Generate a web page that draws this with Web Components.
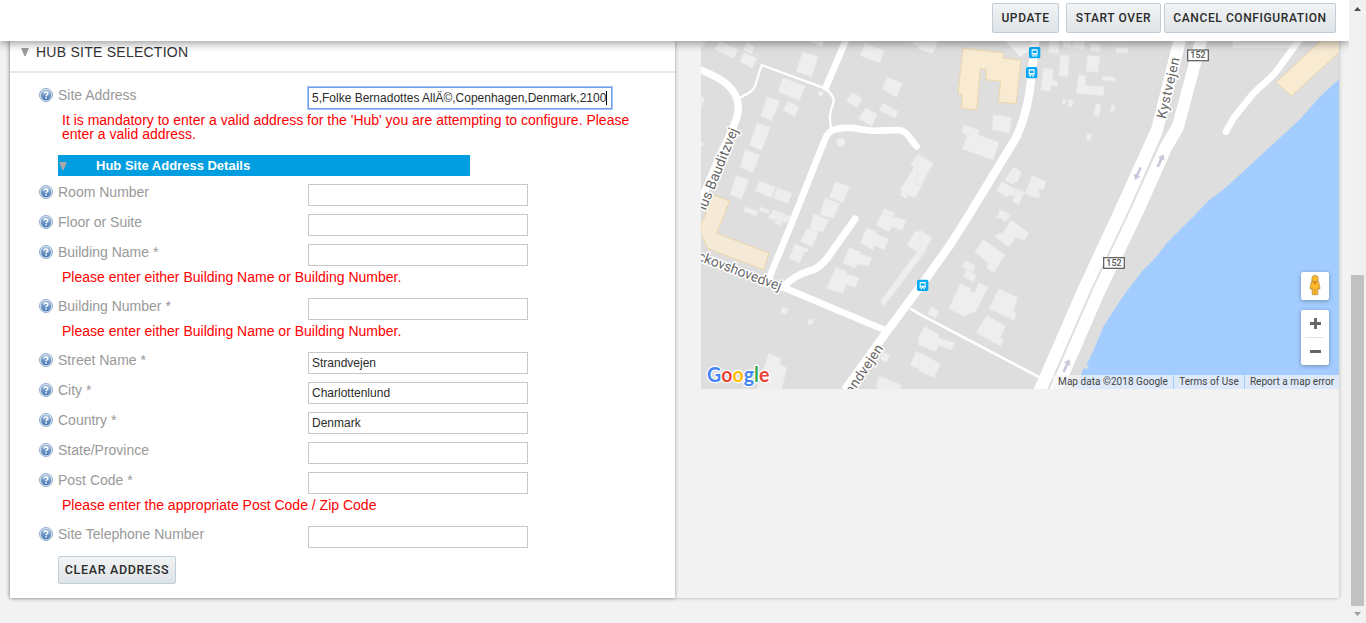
<!DOCTYPE html>
<html lang="en">
<head>
<meta charset="utf-8">
<title>Hub Site Selection</title>
<style>
html,body{margin:0;height:100%;overflow:hidden;background:#f2f2f2}
body{font-family:"Liberation Sans",Arial,sans-serif;font-size:14px;color:#333}
</style>
</head>
<body>
<config-page></config-page>
<script>
const define = (name, html, setup) => {
  const tpl = document.createElement('template');
  tpl.innerHTML = html;
  customElements.define(name, class extends HTMLElement {
    connectedCallback() {
      if (this.shadowRoot) return;
      const root = this.attachShadow({mode: 'open'});
      root.append(tpl.content.cloneNode(true));
      if (setup) setup(this, root);
    }
  });
};

define('action-button', `
<style>
:host{display:flex;align-items:center;justify-content:center;box-sizing:border-box;height:30px;border:1px solid #c1cdd8;border-radius:2px;background:linear-gradient(#f1f3f4,#dfe4e8);font:500 12px/14px Roboto,sans-serif;letter-spacing:.6px;color:#2b2b2b;white-space:nowrap}
</style><slot></slot>`);

define('help-icon', `
<style>:host{display:block;width:14px;height:14px}svg{display:block}</style>
<svg width="14" height="14" viewBox="0 0 14 14">
<defs><linearGradient id="g" x1="0" y1="0" x2="0" y2="1"><stop offset="0" stop-color="#a9c3df"/><stop offset="1" stop-color="#3f72b2"/></linearGradient></defs>
<circle cx="7" cy="7" r="6.5" fill="#dce7f2" stroke="#86a3c6" stroke-width=".9"/>
<circle cx="7" cy="7" r="5.2" fill="url(#g)"/>
<path d="M5.1 5.6C5.1 3.6 8.9 3.6 8.9 5.5C8.9 6.8 7.1 6.7 7.1 8.3" fill="none" stroke="#fff" stroke-width="1.5"/><rect x="6.3" y="9.2" width="1.6" height="1.5" fill="#fff"/>
</svg>`);

define('form-row', `
<style>
:host{display:block;margin-bottom:8px}
.row{display:grid;grid-template-columns:14px 250px auto;column-gap:5px;justify-content:start;align-items:start;height:22px}
help-icon{margin-top:1px}
.label{line-height:16px;color:#999;white-space:nowrap}
.row>.label{width:245px}
.box{box-sizing:border-box;width:220px;height:22px;margin-left:-5px;border:1px solid #c8c8c8;background:#fff;padding:0 3px;font-size:12px;line-height:20px;color:#2b2b2b;white-space:nowrap;display:flex;align-items:center}
:host([focused]) .box{width:304px;border-color:#6f9fe8;box-shadow:0 0 0 1px #a3c4f5}
:host([focused]) .box::after{content:"";width:1px;height:14px;background:#000}
.error{display:none;padding:4px 20px 6px 23px;line-height:14px;color:#f00}
:host([error]) .error{display:block}
</style>
<div class="row"><help-icon></help-icon><div class="label"><slot></slot></div><div class="box"></div></div>
<div class="error"></div>`, (el, root) => {
  root.querySelector('.box').textContent = el.getAttribute('value') || '';
  root.querySelector('.error').textContent = el.getAttribute('error') || '';
});

define('section-bar', `
<style>:host{display:flex;align-items:center;box-sizing:border-box;width:412px;height:21px;margin:0 0 8px 19px;background:#009de0;color:#fff;font-weight:bold;font-size:13px}
svg{margin:1px 29px 0 1px}</style>
<svg width="8" height="8"><path d="M0 0H8L4.6 8H3.4Z" fill="#a9a9a9"/></svg><slot></slot>`);

define('hub-panel', `
<style>
:host{display:block;background:#fff;box-shadow:0 0 4px rgba(0,0,0,.35)}
header{display:flex;align-items:center;box-sizing:border-box;height:32px;padding:0 0 9px 11px;border-bottom:2px solid #e8e8e8;letter-spacing:.25px;color:#333}
header svg{margin-right:7px}
.body{padding:14px 0 0 29px}
action-button{width:118px;height:28px;margin-left:19px;font-size:12.5px;letter-spacing:.65px}
</style>
<header><svg width="8" height="8"><path d="M0 0H8L4.6 8H3.4Z" fill="#9c9c9c"/></svg><span>HUB SITE SELECTION</span></header>
<div class="body">
<form-row focused value="5,Folke Bernadottes AllÄ©,Copenhagen,Denmark,2100" error="It is mandatory to enter a valid address for the 'Hub' you are attempting to configure. Please enter a valid address.">Site Address</form-row>
<section-bar>Hub Site Address Details</section-bar>
<form-row>Room Number</form-row>
<form-row>Floor or Suite</form-row>
<form-row error="Please enter either Building Name or Building Number.">Building Name *</form-row>
<form-row error="Please enter either Building Name or Building Number.">Building Number *</form-row>
<form-row value="Strandvejen">Street Name *</form-row>
<form-row value="Charlottenlund">City *</form-row>
<form-row value="Denmark">Country *</form-row>
<form-row>State/Province</form-row>
<form-row error="Please enter the appropriate Post Code / Zip Code">Post Code *</form-row>
<form-row>Site Telephone Number</form-row>
<action-button>CLEAR ADDRESS</action-button>
</div>`);

define('map-controls', `
<style>
:host{display:flex;flex-direction:column;gap:10px}
div{width:28px;background:#fff;border-radius:2px;box-shadow:0 1px 4px rgba(0,0,0,.3)}
svg{display:block}
</style>
<div><svg width="28" height="28" viewBox="0 0 28 28">
<path d="M10.6 9h6.8l1.7 7.5-1.7.8-.6-1.5V22.7h-5.6v-6.9l-.6 1.5-1.7-.8z" fill="#fdbb2b" stroke="#b58b42" stroke-width=".8"/>
<circle cx="14" cy="6.6" r="3.2" fill="#fdbb2b" stroke="#b58b42" stroke-width=".8"/>
<path d="M11.8 10h4.4L14 13z" fill="#e8801c"/><path d="M14 17v5.5" stroke="#d9932a" stroke-width="1"/></svg></div>
<div><svg width="28" height="55" viewBox="0 0 28 55"><path d="M9 13.5h11M14.5 8v11M9 41.5h11" stroke="#666" stroke-width="2.8"/><path d="M4 27.5h19" stroke="#e4e4e4"/></svg></div>`);

define('site-map', `
<style>
:host{display:block;position:relative;width:638px;height:348px;overflow:hidden;background:#dedede}
svg.map{display:block}
map-controls{position:absolute;right:10px;top:231px}
.credit{position:absolute;right:0;bottom:0;display:flex;gap:1px;height:14px;font:10px/14px Roboto,sans-serif;color:#444;letter-spacing:.04px;white-space:nowrap}
.credit span{box-sizing:border-box;background:rgba(245,245,245,.7);text-align:center}
.r{fill:none;stroke:#fff;stroke-linejoin:round}
.b{fill:#eee;stroke:#e5e5e5;stroke-width:2}
.y{fill:#f8ebd2;stroke:#edd6aa;stroke-width:3}
.t{font-family:Roboto,sans-serif;fill:#666;stroke:#fff;stroke-width:9;paint-order:stroke;stroke-linejoin:round}
</style>
<svg class="map" width="638" height="348" viewBox="18 3 1914 1044">
<defs>
<g id="bus"><rect width="34" height="34" rx="5" fill="#03a9f4"/><path d="M8 7h18v18h-3v4h-4v-4h-4v4h-4v-4H8z" fill="#fff"/><path d="M11 11h12v7H11z" fill="#03a9f4"/><path d="M11 21h3v3h-3zM20 21h3v3h-3z" fill="#03a9f4"/></g>
<path id="arr" d="M-4 22V-4h-7L0-20 11-4H4v26z" fill="#c8c9dc"/>
</defs>
<path fill="#a3ccff" d="M1932 118L1875 170 1815 238 1590 445 1540 482 1500 525 1415 610 1380 655 1340 695 1280 775 1225 860 1200 920 1175 975 1183 987 1165 985 1140 1050H1932z"/>
<path class="b" d="M58 28L74 3 129 28 117 56ZM155 8L180 18 170 42 145 30ZM147 37L186 55 172 85 134 65ZM18 0H35L26 20 18 18ZM340 0H388L380 20ZM322 35L370 50 350 112 304 95ZM264 113L332 138 313 182 249 155ZM216 171L255 183 230 242 197 228ZM279 183L313 202 299 231 263 210ZM187 248L226 262 200 332 162 315ZM151 328L195 345 174 399 135 382ZM124 406L163 420 139 478 104 463ZM193 422L242 442 230 474 181 452ZM246 443L292 460 279 490 235 474ZM18 168L30 175 18 208ZM18 305L28 309 24 320 18 319ZM510 10L569 32 555 69 495 47ZM645 10L690 -5 690 30ZM577 110L622 130 605 173 561 147ZM472 157L502 175 486 203 454 182ZM513 203L547 222 530 259 490 235ZM564 190L610 215 601 235 552 210ZM668 341L715 369 661 474 640 465 633 476 616 465 622 455 615 450 658 380 647 374ZM421 424L464 440 444 488 402 472ZM391 474L436 491 415 535 375 525 378 512ZM150 500L192 514 184 527 145 514ZM197 500L224 512 220 522 191 512ZM235 509L292 530 270 550 220 535ZM568 505L600 520 592 540 555 530Z"/>
<circle cx="377" cy="161" r="8" fill="#eee"/><circle cx="437" cy="307" r="13" fill="#eee"/>
<g transform="translate(0 525)"><path class="b" d="M170 0H185V7ZM223 -3L272 0 262 22 221 5ZM245 9L262 17 256 32 238 22ZM355 -5L403 15 384 52 371 46 368 54 345 42ZM337 40L371 51 352 95 315 80ZM300 87L328 97 341 101 338 112 330 110 313 145 281 130ZM560 -5L634 15 622 47 591 35 581 51 543 30ZM514 38L543 49 545 58 582 71 567 105 539 90 534 105 496 84ZM463 98L496 110 497 118 532 127 520 154 488 147 478 160 443 144ZM423 156L455 169 456 176 493 188 481 217 454 208 444 235 394 221ZM636 90L660 50 678 48 695 60 695 105 568 272 555 260 666 110ZM262 275L280 280 274 299 257 292ZM221 415L258 430 255 448 276 459 260 525H185ZM566 411L586 423 572 443 556 431ZM553 483L620 510 612 530H550L543 512ZM690 335L695 330V392L673 385 680 348ZM663 410L700 427V475L645 450Z"/><path d="M343 319V330" stroke="#eee" stroke-width="6"/><circle cx="347" cy="320" r="8" fill="#eee"/></g>
<g transform="translate(675 0)"><path class="b" d="M-5 0H56L38 41 -5 27ZM388 0H418L415 42 386 38ZM430 -5H455L452 25 428 20ZM458 0H495L493 28 455 24ZM514 10L543 14 540 35 511 31ZM589 22L624 23 623 40 587 38ZM421 44L448 48 444 110 416 107ZM503 46L540 50 533 98 498 94ZM371 84L400 88 398 121 414 124 412 139 394 137 391 154 362 151ZM475 104L497 107 495 136 553 140 551 168 469 160ZM549 107L587 112 585 124 546 120ZM429 177L439 179 436 194 427 192ZM447 177L461 180 455 202 443 199ZM527 190L543 193 537 230 521 226ZM575 194L586 197 580 217 570 213ZM501 281L515 283 512 302 498 300ZM220 224L275 232 269 280 215 270ZM132 255L178 270 174 284 237 307 219 360 127 327 141 287 125 274ZM-10 345L40 370 0 435-10 435ZM281 380L305 396 292 428 282 425 278 434 254 420ZM246 424L289 449 280 468 266 466 260 472 229 453ZM290 445L314 456 296 494 278 484ZM337 406L379 426 370 450 359 446 354 456 362 462 355 475 314 462ZM239 507L272 525 265 535H229Z"/>
<path d="M250 -3H365L330 30 300 50Z" fill="#f2f2f2"/><path class="y" d="M129 25L251 38 249 54 303 61 288 191 235 186 242 124 197 119 200 88 181 87 170 210 124 205 127 164 114 161Z"/></g>
<g transform="translate(675 525)"><path class="b" d="M232 0H270L255 20ZM274 15L328 55 312 77 288 67 267 96 224 65 239 52 246 56ZM190 73L256 120 221 174 199 158 205 145 164 110ZM137 136L166 153 160 170 125 155ZM140 163L169 180 160 200 129 185ZM121 205L153 220 151 231 163 232 176 203 205 217 167 291 130 304 86 281ZM236 221L293 247 281 290 290 296 282 316 207 282ZM200 300L257 334 242 368 251 374 242 394 168 354ZM35 274L58 289 46 309 22 296ZM14 335L57 358 54 368 105 384 94 406 56 390 47 410 -5 390 -5 365ZM0 413L63 447 43 488 -5 467ZM0 45L37 69 0 125Z"/></g>
<g transform="translate(1305 0)"><path d="M308 -3H490L486 24H308Z" fill="#ededed"/><path class="y" d="M575 0L438 127 484 168 640 25 640 0Z"/></g>
<path class="y" style="fill:#f5ead7" d="M55 465L104 483 65 580 222 639 206 690 38 625 18 580 18 555Z"/>
<path class="r" stroke-width="22" d="M-5 82C70 108 130 140 130 205C129 240 105 280 85 325L5 510"/>
<path class="r" stroke-width="7" d="M135 173C160 160 175 153 180 138L200 75 390 145C410 160 420 175 415 190C400 225 405 240 408 265"/>
<path class="r" stroke-width="20" d="M455-5L392 143M220 720L300 525 388 302Q400 270 425 267C480 255 500 275 550 272L610 270C635 272 640 290 665 319" stroke-linecap="round"/>
<path class="r" stroke-width="22" stroke-linecap="round" d="M480 537L400 650Q372 687 345 692C310 703 290 715 265 742"/>
<path class="r" stroke-width="20" d="M0 645L265 742 540 858 580 873"/>
<path class="r" stroke-width="25" d="M1022-5L1010 100Q1003 205 965 290L822 525 765 615 690 720 575 875 450 1050"/>
<path class="r" stroke-width="8" d="M645 805L675 823 1035 1013"/>
<path fill="#fff" d="M1435 0L1370 260 1250 525 1150 740 1015 1050H1103L1165 910 1225 770 1343 525 1430 330 1465 270 1537 0Z"/>
<path fill="#dedede" d="M1474 0H1500L1433 250 1395 315 1300 525 1193 750 1063 1050H1056L1187 750 1294 525 1388 313 1402 280Z"/>
<path class="r" stroke-width="20" stroke-linecap="round" stroke-linejoin="round" d="M1820-10L1740 100 1675 160 1615 235 1593 275"/>
<use href="#bus" x="1002" y="21"/><use href="#bus" x="993" y="81"/><use href="#bus" x="666" y="719"/>
<use href="#arr" transform="translate(1397 361) rotate(25)"/><use href="#arr" transform="translate(1328 402) rotate(205)"/><use href="#arr" transform="translate(1115 976) rotate(25)"/>
<g fill="#fff" stroke="#666" stroke-width="4"><rect x="1478" y="30" width="62" height="32"/><rect x="1226" y="653" width="62" height="32"/></g>
<g font-family="Roboto,sans-serif" font-size="27" font-weight="500" fill="#555"><text x="1486" y="55" textLength="46">152</text><text x="1234" y="678" textLength="46">152</text></g>
<text class="t" font-size="41" transform="translate(1412 238) rotate(-77)" textLength="187">Kystvejen</text>
<text class="t" font-size="42" transform="translate(32 513) rotate(-68)" textLength="262">ius Bauditzvej</text>
<text class="t" font-size="42" transform="translate(5 660) rotate(20.5)" textLength="266">ckovshovedvej</text>
<text class="t" font-size="41" transform="translate(566 925) rotate(-56)" x="-198" textLength="198">trandvejen</text>
<text x="36" y="1026" font-family="Lato,sans-serif" font-size="60" font-weight="700" textLength="187" lengthAdjust="spacingAndGlyphs" stroke="#fff" stroke-width="7" paint-order="stroke"><tspan fill="#4285f4">G</tspan><tspan fill="#ea4335">o</tspan><tspan fill="#fbbc05">o</tspan><tspan fill="#4285f4">g</tspan><tspan fill="#34a853">l</tspan><tspan fill="#ea4335">e</tspan></text>
</svg>
<map-controls></map-controls>
<div class="credit"><span style="width:120px">Map data ©2018 Google</span><span style="width:70px">Terms of Use</span><span style="width:94px">Report a map error</span></div>`);

define('page-scrollbar', `
<style>:host{display:flex;flex-direction:column;align-items:center;box-sizing:border-box;width:17px;height:623px;background:#f1f1f1;padding:7px 0}
.thumb{width:13px;height:331px;background:#c1c1c1;margin-top:264px}svg{display:block}</style>
<svg width="7" height="4"><path d="M0 4L3.5 0 7 4z" fill="#505050"/></svg><div class="thumb"></div><svg width="7" height="4" style="margin-top:6px"><path d="M0 0H7L3.5 4z" fill="#a0a0a0"/></svg>`);

define('top-bar', `
<style>:host{display:flex;justify-content:flex-end;box-sizing:border-box;height:41px;padding:3px 13px 0 0;background:#fff;position:relative;z-index:5;box-shadow:0 2px 9px rgba(0,0,0,.42)}</style><slot></slot>`);

define('config-page', `
<style>
:host{display:grid;grid-template-columns:1349px 17px;height:623px;width:1366px;overflow:hidden}
.view{height:623px;overflow:hidden}
main{display:grid;grid-template-columns:665px 638px;column-gap:26px;align-items:start;width:1329px;height:557px;margin-left:10px;background:#f2f2f2;box-shadow:0 0 4px rgba(0,0,0,.25)}
hub-panel{height:557px}
</style>
<div class="view">
<top-bar><action-button style="width:67px;margin-right:7px">UPDATE</action-button><action-button style="width:95px;margin-right:3px">START OVER</action-button><action-button style="width:172px">CANCEL CONFIGURATION</action-button></top-bar>
<main><hub-panel></hub-panel><site-map></site-map></main>
</div>
<page-scrollbar></page-scrollbar>`);
</script>
</body>
</html>
